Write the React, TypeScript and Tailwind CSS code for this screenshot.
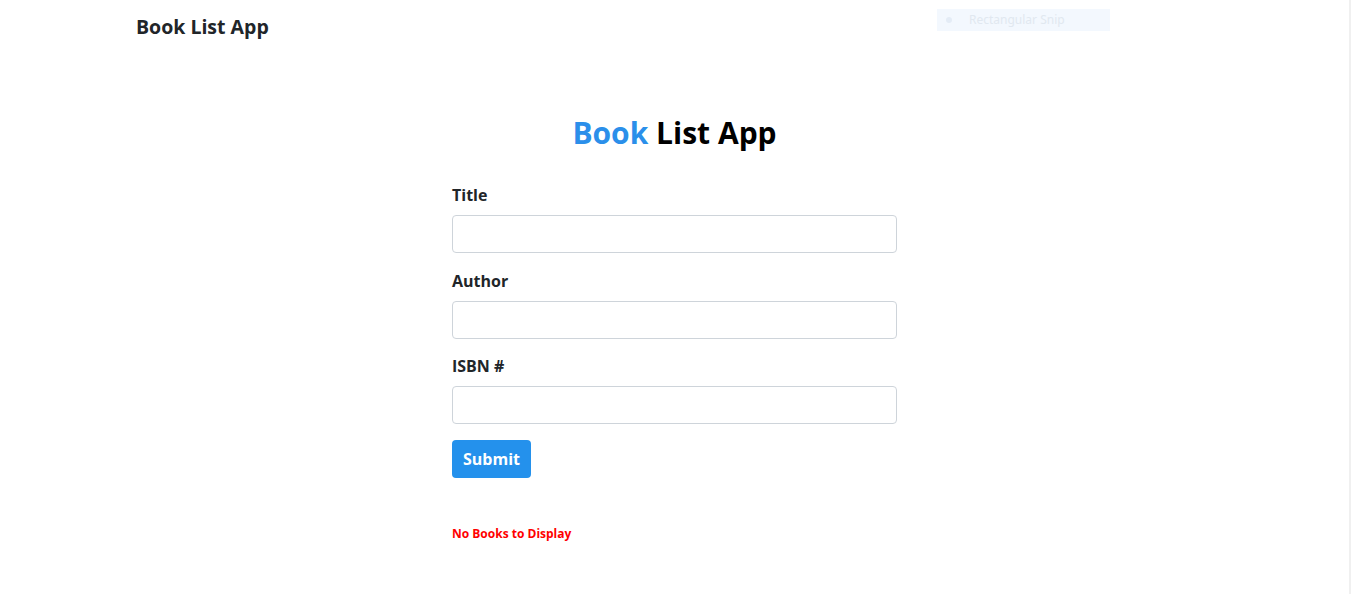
import React from "react";

const font = { fontFamily: '"Comic Sans MS", "Open Sans", sans-serif' };

function Field({ label }: { label: string }) {
  return (
    <div className="mb-[15.5px]">
      <label className="block text-[16px] font-bold text-[#212529] leading-[24px] mb-[8px]">{label}</label>
      <input className="block w-full h-[38px] border border-[#ced4da] rounded-[4px] bg-white" />
    </div>
  );
}

export default function App() {
  return (
    <div className="flex min-h-[594px] bg-white" style={font}>
      <div className="flex-1 relative">
        <nav className="h-[55px] pl-[136px] pt-[13px]">
          <span className="text-[19.5px] font-bold text-[#212529] leading-[28px]">Book List App</span>
        </nav>
        <div className="absolute left-[937px] top-[9px] w-[173px] h-[22px] bg-[#f3f8fe] flex items-center">
          <span className="ml-[9px] w-[6px] h-[6px] rounded-full bg-[#e4ecf6]"></span>
          <span className="ml-[17px] text-[12px] text-[#e1e8f0]" style={{ fontFamily: '"Noto Sans", sans-serif' }}>Rectangular Snip</span>
        </div>
        <div className="w-[445px] mx-auto mt-[56px]">
          <h1 className="text-center text-[30px] font-bold leading-[44px] text-black mb-[28px]">
            <span className="text-[#2b8fea]">Book</span> List App
          </h1>
          <Field label="Title" />
          <Field label="Author" />
          <Field label="ISBN #" />
          <button className="mt-[0.5px] h-[38px] px-[11px] bg-[#2491ec] text-white text-[16px] font-bold rounded-[4px]">Submit</button>
          <p className="mt-[47px] text-[12px] font-bold text-[#ff0000]">No Books to Display</p>
        </div>
      </div>
      <div className="w-[2px] bg-[#f0f0f0]"></div>
    </div>
  );
}
